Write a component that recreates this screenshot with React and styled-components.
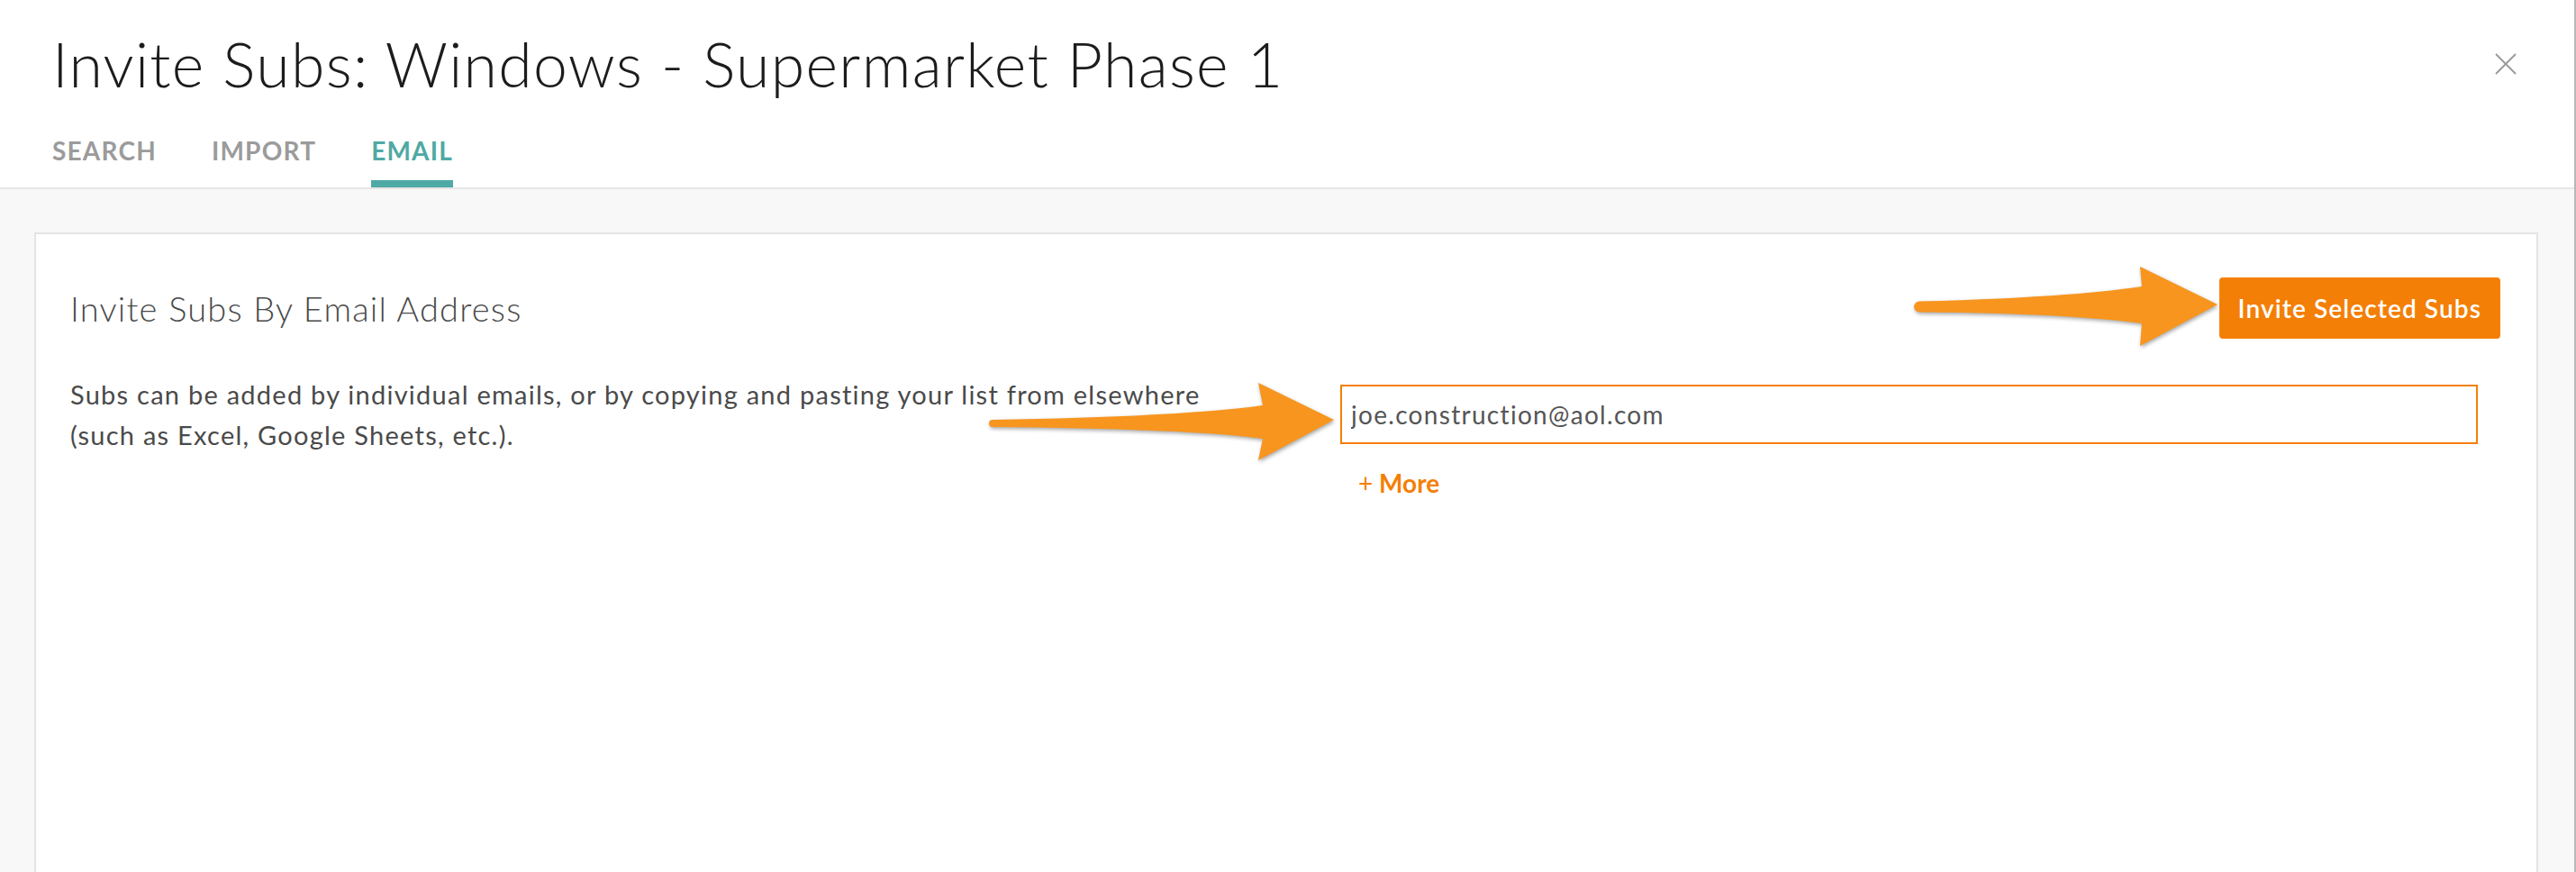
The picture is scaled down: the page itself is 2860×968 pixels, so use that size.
import React from "react";
import styled, { createGlobalStyle } from "styled-components";

const GlobalStyle = createGlobalStyle`
  html, body {
    margin: 0;
    padding: 0;
    background: #fff;
  }
  body {
    font-family: "Lato", "Open Sans", sans-serif;
    -webkit-font-smoothing: antialiased;
  }
  * {
    box-sizing: border-box;
  }
`;

const Modal = styled.div`
  position: relative;
  display: flex;
  flex-direction: column;
  min-height: 968px;
  border-right: 2px solid #b8b8b8;
`;

const Header = styled.div`
  background: #fff;
  padding: 31px 64px 0 58px;
  border-bottom: 2px solid #e6e6e6;
`;

const TitleRow = styled.div`
  display: flex;
  align-items: center;
  justify-content: space-between;
`;

const Title = styled.h1`
  margin: 0;
  font-size: 68px;
  line-height: 80px;
  font-weight: 300;
  letter-spacing: 1.3px;
  color: #1c1c1c;
`;

const CloseButton = styled.button`
  display: flex;
  padding: 0;
  border: none;
  background: none;
  color: #9b9b9b;
  cursor: pointer;
`;

const Tabs = styled.div`
  display: flex;
  gap: 61px;
  margin-top: 42px;
`;

const Tab = styled.div`
  font-size: 28px;
  line-height: 28px;
  font-weight: 700;
  letter-spacing: 1.2px;
  color: ${(p) => (p.active ? "#4fa9a4" : "#9b9b9b")};
  padding-bottom: 19px;
  border-bottom: 8px solid ${(p) => (p.active ? "#4fa9a4" : "transparent")};
`;

const Body = styled.div`
  flex: 1;
  display: flex;
  background: #f8f8f8;
  padding: 48px 40px 0 38px;
`;

const Card = styled.div`
  flex: 1;
  background: #fff;
  border: 2px solid #e4e4e4;
  border-bottom: none;
  padding: 48px 40px 0 38px;
`;

const CardHeader = styled.div`
  display: flex;
  align-items: center;
  justify-content: space-between;
`;

const CardTitle = styled.h2`
  margin: 0;
  font-size: 38px;
  line-height: 44px;
  font-weight: 300;
  letter-spacing: 1.2px;
  color: #4a4a4a;
`;

const PrimaryButton = styled.button`
  height: 68px;
  padding: 0 21px;
  border: none;
  border-radius: 4px;
  background: #f47f06;
  color: #fff;
  font-family: inherit;
  font-size: 28px;
  font-weight: 600;
  letter-spacing: 1.1px;
  cursor: pointer;
`;

const CardRow = styled.div`
  display: grid;
  grid-template-columns: 1fr 1288px;
  margin-top: 39px;
`;

const Help = styled.p`
  margin: 0;
  font-size: 29px;
  line-height: 45px;
  letter-spacing: 1.25px;
  color: #4a4a4a;
`;

const EmailColumn = styled.div`
  padding: 12px 25px 0 0;
`;

const EmailInput = styled.input`
  display: block;
  width: 100%;
  height: 66px;
  padding: 0 10px;
  border: 2px solid #f47f06;
  outline: none;
  font-family: inherit;
  font-size: 28px;
  letter-spacing: 1.3px;
  color: #555;
  background: #fff;
`;

const MoreLink = styled.a`
  display: inline-block;
  margin: 26px 0 0 20px;
  font-size: 28px;
  line-height: 34px;
  font-weight: 700;
  color: #f47f06;
  text-decoration: none;

  span {
    font-weight: 400;
  }
`;

const Annotations = styled.svg`
  position: absolute;
  top: 0;
  left: 0;
  pointer-events: none;
  filter: drop-shadow(1px 2px 2px rgba(0, 0, 0, 0.35));
`;

const CloseIcon = () => (
  <svg width="24" height="24" viewBox="0 0 24 24">
    <path d="M1 1L23 23M23 1L1 23" stroke="currentColor" strokeWidth="2" />
  </svg>
);

const App = () => {
  return (
    <Modal>
      <GlobalStyle />
      <Header>
        <TitleRow>
          <Title>Invite Subs: Windows - Supermarket Phase 1</Title>
          <CloseButton aria-label="Close">
            <CloseIcon />
          </CloseButton>
        </TitleRow>
        <Tabs>
          <Tab>SEARCH</Tab>
          <Tab>IMPORT</Tab>
          <Tab active>EMAIL</Tab>
        </Tabs>
      </Header>
      <Body>
        <Card>
          <CardHeader>
            <CardTitle>Invite Subs By Email Address</CardTitle>
            <PrimaryButton>Invite Selected Subs</PrimaryButton>
          </CardHeader>
          <CardRow>
            <Help>
              Subs can be added by individual emails, or by copying and pasting your list from elsewhere
              <br />
              (such as Excel, Google Sheets, etc.).
            </Help>
            <EmailColumn>
              <EmailInput defaultValue="joe.construction@aol.com" />
              <MoreLink href="#">
                <span>+</span> More
              </MoreLink>
            </EmailColumn>
          </CardRow>
        </Card>
      </Body>
      <Annotations width="2860" height="968" viewBox="0 0 2860 968">
        <path
          fill="#f8951e"
          d="M2131,334.5 Q2300,330 2378,318 L2376,296 L2462,338 L2376,384 L2378,359 Q2300,348 2131,346.5 A6,6 0 0 1 2131,334.5 Z"
        />
        <path
          fill="#f8951e"
          d="M1102,466 Q1320,462 1402,450 L1397,425 L1481,466 L1397,511 L1402,487 Q1320,476 1102,474 A4,4 0 0 1 1102,466 Z"
        />
      </Annotations>
    </Modal>
  );
};

export default App;
